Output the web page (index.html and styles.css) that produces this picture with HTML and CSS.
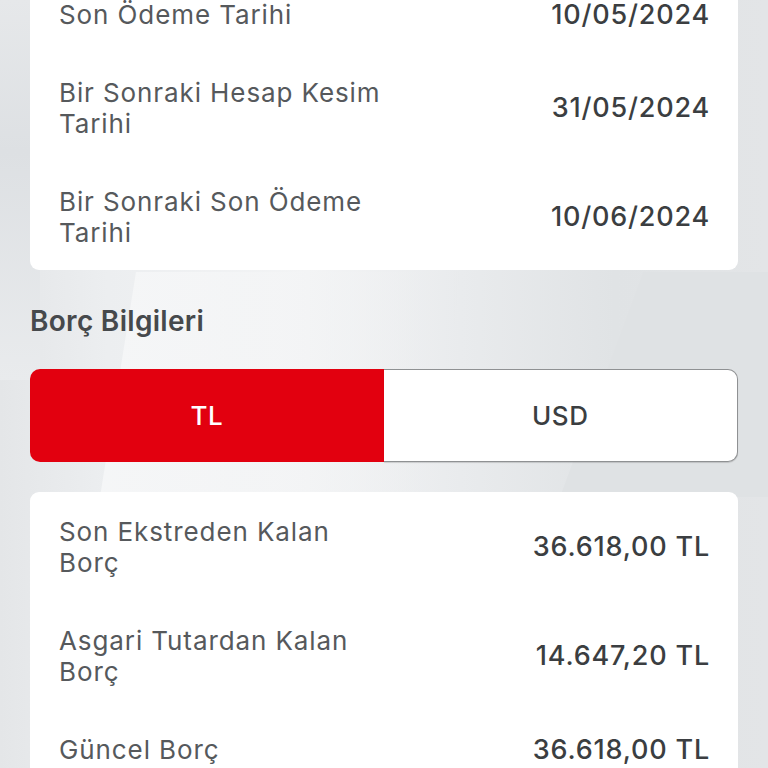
FILE: index.html
```html
<!DOCTYPE html>
<html lang="tr">
<head>
<meta charset="utf-8">
<title>Borç Bilgileri</title>
<link rel="stylesheet" href="styles.css">
</head>
<body>
<div class="bg">
  <div class="shape shape-a"></div>
  <div class="shape shape-b"></div>
  <div class="shape shape-c"></div>
</div>
<main class="page">
  <section class="card card-first">
    <div class="row">
      <div class="label">Son Ödeme Tarihi</div>
      <div class="value">10/05/2024</div>
    </div>
    <div class="row">
      <div class="label">Bir Sonraki Hesap Kesim Tarihi</div>
      <div class="value">31/05/2024</div>
    </div>
    <div class="row">
      <div class="label">Bir Sonraki Son Ödeme Tarihi</div>
      <div class="value">10/06/2024</div>
    </div>
  </section>

  <h2 class="heading">Borç Bilgileri</h2>

  <div class="segment">
    <button class="seg seg-active">TL</button>
    <button class="seg seg-idle">USD</button>
  </div>

  <section class="card">
    <div class="row">
      <div class="label">Son Ekstreden Kalan Borç</div>
      <div class="value">36.618,00 TL</div>
    </div>
    <div class="row">
      <div class="label">Asgari Tutardan Kalan Borç</div>
      <div class="value">14.647,20 TL</div>
    </div>
    <div class="row">
      <div class="label">Güncel Borç</div>
      <div class="value">36.618,00 TL</div>
    </div>
  </section>
</main>
</body>
</html>
```

FILE: styles.css
```css
* { box-sizing: border-box; }

html, body {
  margin: 0;
  padding: 0;
  height: 768px;
  overflow: hidden;
}

body {
  font-family: Inter, "Open Sans", "Liberation Sans", sans-serif;
  background: #e6e8ea;
  position: relative;
}

.bg {
  position: absolute;
  inset: 0;
  background: linear-gradient(90deg, #e4e6e8 0%, #eceef0 14%, #f3f4f5 40%, #e9ebed 60%, #e0e3e5 80%, #e3e5e7 100%);
  overflow: hidden;
}

.shape {
  position: absolute;
}

.shape-a {
  left: 0;
  top: 0;
  width: 40px;
  height: 380px;
  background: linear-gradient(180deg, #e6e8ea 0%, #dde0e3 40%, #e9ebed 100%);
}

.shape-b {
  left: 100px;
  top: 272px;
  width: 360px;
  height: 225px;
  background: linear-gradient(90deg, rgba(246,247,248,0.9) 0%, rgba(244,245,246,0.8) 50%, rgba(232,234,236,0.4) 100%);
  clip-path: polygon(10% 0, 100% 0, 94% 100%, 0 100%);
}

.shape-c {
  left: 560px;
  top: 272px;
  width: 208px;
  height: 225px;
  background: #dfe2e4;
  clip-path: polygon(40% 0, 100% 0, 100% 100%, 0 100%);
}

.page {
  position: relative;
  padding: 0 30px;
}

.card {
  background: #ffffff;
  border-radius: 9px;
  padding: 0 29px;
}

.card-first {
  margin-top: -25px;
}

.row {
  display: flex;
  align-items: center;
  justify-content: space-between;
  padding: 23.5px 0;
}

.card-first .row:last-child {
  padding-bottom: 22.5px;
}

.label {
  width: 328px;
  font-size: 26px;
  line-height: 31px;
  letter-spacing: 0.9px;
  color: #56595c;
  font-weight: 400;
}

.value {
  font-size: 27px;
  line-height: 31px;
  letter-spacing: 0.8px;
  margin-right: -1px;
  font-weight: 500;
  color: #3b3e41;
  text-align: right;
  white-space: nowrap;
}

.heading {
  margin: 34px 0 31px 0;
  font-size: 28px;
  line-height: 34px;
  letter-spacing: 0.3px;
  font-weight: 600;
  color: #46494c;
}

.segment {
  display: flex;
  height: 93px;
  margin-bottom: 30px;
}

.seg {
  flex: 1;
  font-family: inherit;
  font-size: 26px;
  font-weight: 500;
  letter-spacing: 0.5px;
  border: none;
  margin: 0;
  padding: 0;
}

.seg-active {
  background: #e2000f;
  color: #ffffff;
  border-radius: 10px 0 0 10px;
}

.seg-idle {
  background: #ffffff;
  color: #3b3e41;
  border: 1.5px solid #8f9193;
  border-left: none;
  border-radius: 0 10px 10px 0;
  box-shadow: 0 1px 1px rgba(0,0,0,0.15);
}
```
